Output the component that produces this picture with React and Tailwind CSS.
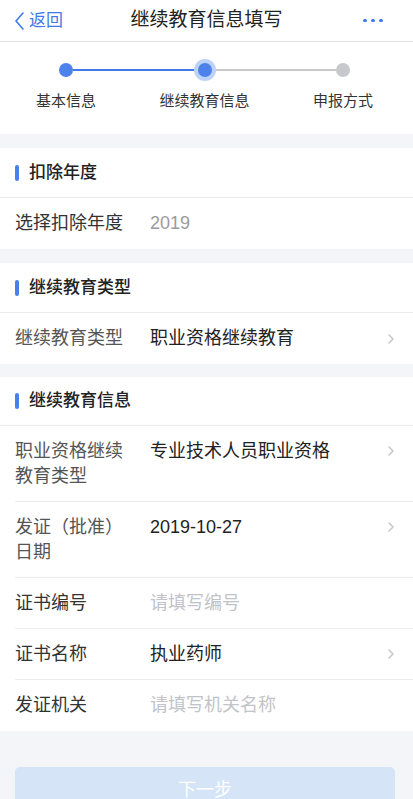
const FONT = {
  fontFamily: '"Liberation Sans", "Noto Sans CJK SC", sans-serif',
};

const Chevron = () => (
  <svg width="8" height="12" viewBox="0 0 8 12" className="shrink-0">
    <path d="M2 2 L6 6 L2 10" fill="none" stroke="#c4c6cc" strokeWidth="1.5" strokeLinecap="round" strokeLinejoin="round" />
  </svg>
);

const SectionTitle = ({ title, tight }) => (
  <div
    className={`flex items-center ${tight ? "h-[49px]" : "h-[50px]"} pl-[15px] border-b border-[#ececec]`}
  >
    <span className="w-[4px] h-[16px] rounded-full bg-[#4a7ff0]" />
    <span className="ml-[10px] text-[17px] font-medium text-[#222]">{title}</span>
  </div>
);

const Row = ({ label, value, placeholder, arrow, dark, last, twoLine, hint }) => (
  <div
    className={`flex ml-[15px] pr-[18px] ${
      twoLine ? "pt-[13px] pb-[12px] items-start" : "h-[51px] items-center"
    } ${last ? "" : "border-b border-[#ececec]"}`}
  >
    <div
      className={`w-[135px] pr-[24px] shrink-0 text-[18px] leading-[25px] ${
        dark ? "text-[#333]" : "text-[#555]"
      }`}
    >
      {label}
    </div>
    <div
      className={`flex-1 text-[18px] leading-[25px] ${
        value ? "text-[#222]" : hint ? "text-[#9a9ba0]" : "text-[#c2c3c8]"
      }`}
    >
      {value || placeholder}
    </div>
    {arrow && (
      <div className={twoLine ? "pt-[6px]" : ""}>
        <Chevron />
      </div>
    )}
  </div>
);

export default function App() {
  return (
    <div className="w-[413px] min-h-[799px] bg-[#f4f5f8] overflow-hidden" style={FONT}>
      {/* Nav bar */}
      <div className="flex items-center justify-between h-[42px] bg-white border-b border-[#e2e2e2] px-[14px]">
        <div className="flex items-center gap-[4px] text-[#3f7ae8] w-[80px]">
          <svg width="11" height="18" viewBox="0 0 11 18">
            <path d="M9 1 L2 9 L9 17" fill="none" stroke="#3f7ae8" strokeWidth="1.6" strokeLinecap="round" strokeLinejoin="round" />
          </svg>
          <span className="text-[17px]">返回</span>
        </div>
        <div className="text-[19px] text-[#222]">继续教育信息填写</div>
        <div className="flex justify-end gap-[4.5px] w-[80px] pr-[16px]">
          <span className="w-[3.5px] h-[3.5px] rounded-full bg-[#3f7ae8]" />
          <span className="w-[3.5px] h-[3.5px] rounded-full bg-[#3f7ae8]" />
          <span className="w-[3.5px] h-[3.5px] rounded-full bg-[#3f7ae8]" />
        </div>
      </div>

      {/* Steps */}
      <div className="bg-white pt-[17px] pb-[23px]">
        <div className="flex items-center pl-[59px] pr-[63px]">
          <span className="w-[14px] h-[14px] rounded-full bg-[#4d82ec] shrink-0" />
          <span className="flex-1 h-[1.5px] bg-[#3f7ae8]" />
          <span className="w-[22px] h-[22px] rounded-full bg-[#bcd2f7] flex items-center justify-center shrink-0">
            <span className="w-[14px] h-[14px] rounded-full bg-[#4d82ec]" />
          </span>
          <span className="flex-1 h-[1.5px] bg-[#c6c8cd]" />
          <span className="w-[14px] h-[14px] rounded-full bg-[#c6c8cd] shrink-0" />
        </div>
        <div className="flex justify-between pl-[6px] pr-[10px] mt-[9px] text-[15px] leading-[21px] text-[#333]">
          <span className="w-[120px] text-center">基本信息</span>
          <span className="w-[120px] text-center">继续教育信息</span>
          <span className="w-[120px] text-center">申报方式</span>
        </div>
      </div>

      {/* 扣除年度 */}
      <div className="mt-[14px] bg-white">
        <SectionTitle title="扣除年度" />
        <Row label="选择扣除年度" placeholder="2019" hint dark last />
      </div>

      {/* 继续教育类型 */}
      <div className="mt-[14px] bg-white">
        <SectionTitle title="继续教育类型" />
        <Row label="继续教育类型" value="职业资格继续教育" arrow last />
      </div>

      {/* 继续教育信息 */}
      <div className="mt-[13px] bg-white">
        <SectionTitle title="继续教育信息" tight />
        <Row label="职业资格继续教育类型" value="专业技术人员职业资格" arrow twoLine />
        <Row label="发证（批准）日期" value="2019-10-27" arrow twoLine />
        <Row label="证书编号" placeholder="请填写编号" dark />
        <Row label="证书名称" value="执业药师" arrow dark />
        <Row label="发证机关" placeholder="请填写机关名称" dark last />
      </div>

      {/* Next button */}
      <div className="pl-[15px] pr-[18px] pt-[36px]">
        <button className="w-full h-[46px] rounded-[5px] bg-[#d5e5f7] text-white text-[18px]">
          下一步
        </button>
      </div>
    </div>
  );
}
